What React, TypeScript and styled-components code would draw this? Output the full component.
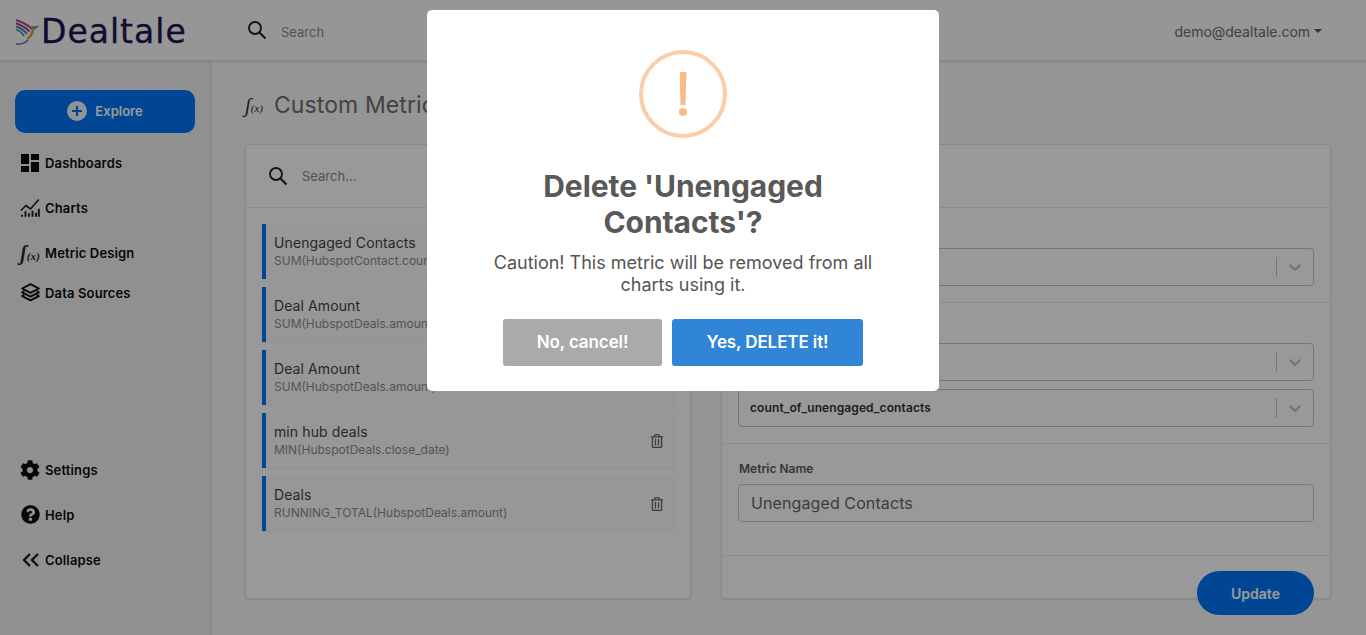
import React from "react";
import styled, { createGlobalStyle } from "styled-components";
import { MdDashboard } from "react-icons/md";
import { FaCog, FaQuestionCircle, FaRegTrashAlt } from "react-icons/fa";

const Global = createGlobalStyle`
  html, body { margin: 0; padding: 0; height: 100%; overflow: hidden; }
  body { font-family: Inter, "Liberation Sans", sans-serif; background: #f8f8f8; color: #212529; }
  * { box-sizing: border-box; }
`;

const Page = styled.div`
  width: 1366px;
  height: 635px;
  display: flex;
  flex-direction: column;
  overflow: hidden;
`;
const Header = styled.header`
  height: 61px;
  flex: none;
  display: flex;
  align-items: center;
  background: #fbfbfb;
  border-bottom: 1px solid #e2e2e2;
  box-shadow: 0 1px 3px rgba(0, 0, 0, 0.12);
  position: relative;
  z-index: 1;
`;
const Brand = styled.div`
  width: 247px;
  padding: 3px 0 0 15px;
  display: flex;
  align-items: center;
  flex: none;
`;
const BrandName = styled.span`
  font-family: "DejaVu Sans", sans-serif;
  font-size: 33px;
  font-weight: 400;
  letter-spacing: 1px;
  color: #1e1554;
  line-height: 1;
  -webkit-text-stroke: 0.35px #1e1554;
`;
const TopSearch = styled.div`
  display: flex;
  align-items: center;
  gap: 14px;
  flex: 1;
  font-size: 13px;
  color: #8a8a8a;
  & > span {
    margin-top: 3px;
  }
`;
const Account = styled.div`
  margin-right: 44px;
  margin-top: 3px;
  display: flex;
  align-items: center;
  gap: 4px;
  font-size: 14px;
  letter-spacing: -0.03px;
  color: #6d6d6d;
`;
const Caret = styled.span`
  width: 0;
  height: 0;
  border-left: 4px solid transparent;
  border-right: 4px solid transparent;
  border-top: 4px solid #555;
  margin-bottom: 2px;
`;
const Body = styled.div`
  flex: 1;
  display: flex;
  min-height: 0;
`;
const Sidebar = styled.aside`
  width: 211px;
  flex: none;
  background: #f0f1f2;
  border-right: 1px solid #e0e0e0;
  box-shadow: 1px 0 2px rgba(0, 0, 0, 0.08);
  padding: 29px 15px 0;
  display: flex;
  flex-direction: column;
`;
const Explore = styled.button`
  width: 180px;
  height: 43px;
  flex: none;
  border: none;
  border-radius: 10px;
  background: #0076f8;
  color: #fff;
  font-family: inherit;
  font-size: 13px;
  font-weight: 600;
  display: flex;
  align-items: center;
  justify-content: center;
  gap: 8px;
  padding: 0 0 1px 0;
  margin-bottom: 7px;
`;
const ExplorePlus = styled.span`
  width: 20px;
  height: 20px;
  border-radius: 50%;
  background: #f2f5f9;
  display: flex;
  align-items: center;
  justify-content: center;
`;
const NavItem = styled.div<{ $h?: number }>`
  height: ${(p) => p.$h ?? 45}px;
  display: flex;
  align-items: center;
  margin-left: 5px;
  font-size: 13px;
  font-weight: 600;
  letter-spacing: 0.15px;
  color: #0c0c0c;
  white-space: nowrap;
`;
const NavIcon = styled.span`
  width: 20px;
  height: 20px;
  margin-right: 5px;
  flex: none;
  display: flex;
  align-items: center;
  justify-content: center;
  color: #0c0c0c;
  & > svg {
    flex: none;
  }
`;
const NavSpacer = styled.div`
  height: 137px;
  flex: none;
`;
const FxGlyph = styled.span`
  font-family: "Liberation Serif", serif;
  font-style: italic;
  font-size: 20px;
  line-height: 20px;
  height: 20px;
  color: #2a2a2a;
  white-space: nowrap;
  display: inline-flex;
  align-items: baseline;
  & > small {
    font-size: 11px;
    margin-left: 0;
  }
`;
const Main = styled.main`
  flex: 1;
  padding: 27px 35px 0 34px;
  min-width: 0;
`;
const TitleRow = styled.div`
  height: 34px;
  display: flex;
  align-items: center;
  gap: 11px;
  margin-bottom: 22px;
`;
const Title = styled.h1`
  margin: 0;
  font-size: 23px;
  font-weight: 400;
  letter-spacing: 0.1px;
  color: #6f6f6f;
`;
const Columns = styled.div`
  display: flex;
  gap: 30px;
  align-items: flex-start;
`;
const Card = styled.section<{ $w: number }>`
  width: ${(p) => p.$w}px;
  height: 455px;
  flex: none;
  background: #fff;
  border: 1px solid #e3e3e3;
  border-radius: 4px;
  box-shadow: 0 1px 2px rgba(0, 0, 0, 0.08);
`;
const SearchRow = styled.div`
  height: 63px;
  border-bottom: 1px solid #ebebeb;
  display: flex;
  align-items: center;
  padding-left: 22px;
  gap: 14px;
  font-size: 13px;
  color: #888;
`;
const List = styled.ul`
  list-style: none;
  margin: 0;
  padding: 16px 15px 0 16px;
  display: flex;
  flex-direction: column;
  gap: 8px;
`;
const Item = styled.li`
  height: 55px;
  width: 413px;
  border-left: 4px solid #0076f8;
  background: #fcfcfc;
  box-shadow: 0 1px 2px rgba(0, 0, 0, 0.05);
  padding: 10px 11px 0 8px;
  display: flex;
  align-items: flex-start;
  justify-content: space-between;
`;
const ItemName = styled.div`
  font-size: 14px;
  line-height: 17px;
  letter-spacing: 0.1px;
  color: #444;
`;
const ItemFormula = styled.div`
  font-size: 12px;
  line-height: 16px;
  margin-top: 2px;
  color: #8c8c8c;
`;
const Trash = styled.span`
  color: #666;
  font-size: 14px;
  align-self: center;
  margin-top: -9px;
  display: flex;
`;
const CardHead = styled.div`
  height: 63px;
  border-bottom: 1px solid #ebebeb;
`;
const Section = styled.div<{ $h: number }>`
  height: ${(p) => p.$h}px;
  border-bottom: 1px solid #ebebeb;
  padding: 17px 16px 0;
  display: flex;
  flex-direction: column;
`;
const FieldLabel = styled.label`
  font-size: 12px;
  line-height: 15px;
  font-weight: 600;
  color: #5a5a5a;
  margin: 0 0 8px 1px;
`;
const Select = styled.div<{ $gap?: number }>`
  height: 38px;
  flex: none;
  margin-top: ${(p) => p.$gap ?? 0}px;
  border: 1px solid #c4c4c4;
  border-radius: 4px;
  padding: 0 8px 1px 11px;
  display: flex;
  align-items: center;
  justify-content: space-between;
  font-size: 12px;
  font-weight: 600;
  letter-spacing: 0.1px;
  color: #333;
`;
const SelectArrow = styled.span`
  display: flex;
  align-items: center;
  height: 20px;
  padding-left: 8px;
  border-left: 1px solid #c4c4c4;
`;
const TextInput = styled.div`
  height: 38px;
  flex: none;
  border: 1px solid #ccc;
  border-radius: 4px;
  padding: 0 12px;
  display: flex;
  align-items: center;
  font-size: 16px;
  letter-spacing: 0.1px;
  color: #666;
`;
const Footer = styled.div`
  display: flex;
  justify-content: flex-end;
  padding: 15px 16px 0;
`;
const Update = styled.button`
  width: 117px;
  height: 44px;
  border: none;
  border-radius: 22px;
  background: #0076f8;
  color: #fff;
  font-family: inherit;
  font-size: 14px;
  font-weight: 600;
`;
const Overlay = styled.div`
  position: fixed;
  inset: 0;
  z-index: 10;
  background: rgba(0, 0, 0, 0.4);
  display: flex;
  justify-content: center;
  align-items: flex-start;
  padding-top: 10px;
`;
const Modal = styled.div`
  width: 512px;
  height: 381px;
  background: #fff;
  border-radius: 5px;
  padding: 40px 64px 0;
  display: flex;
  flex-direction: column;
  align-items: center;
  text-align: center;
`;
const WarnIcon = styled.div`
  width: 88px;
  height: 88px;
  flex: none;
  border: 4px solid #facea8;
  border-radius: 50%;
  display: flex;
  flex-direction: column;
  align-items: center;
  padding-top: 18px;
`;
const WarnBar = styled.span`
  width: 7px;
  height: 33px;
  background: #f8bb86;
  clip-path: polygon(0 0, 100% 0, 85% 100%, 15% 100%);
`;
const WarnDot = styled.span`
  width: 8px;
  height: 8px;
  margin-top: 3px;
  border-radius: 50%;
  background: #f8bb86;
`;
const ModalTitle = styled.h2`
  margin: 30px 0 0;
  font-size: 30px;
  line-height: 36px;
  font-weight: 700;
  letter-spacing: -0.07px;
  color: #595959;
`;
const ModalText = styled.p`
  margin: 12px -10px 0;
  font-size: 18px;
  line-height: 22px;
  color: #545454;
`;
const ModalActions = styled.div`
  margin-top: 23px;
  display: flex;
  gap: 10px;
`;
const ModalButton = styled.button<{ $bg: string; $w: number }>`
  width: ${(p) => p.$w}px;
  height: 47px;
  border: none;
  border-radius: 3px;
  background: ${(p) => p.$bg};
  color: #fff;
  font-family: inherit;
  font-size: 17px;
  font-weight: 600;
  letter-spacing: -0.1px;
  padding: 0 0 1px;
`;

const SearchIcon = () => (
  <svg width="20" height="20" viewBox="0 0 20 20" fill="none" stroke="#222" strokeWidth="1.9">
    <circle cx="8" cy="8" r="6" />
    <path d="M12.5 12.5 L18.5 18.5" strokeWidth="2.2" />
  </svg>
);

const ChartIcon = () => (
  <svg width="20" height="20" viewBox="0 0 20 20" fill="none" stroke="#1a1a1a" strokeWidth="1.6">
    <path d="M0.8 12.5 L6 7.5 L10.5 11 L18.8 1.5" />
    <path d="M2 18.8v-2M5.5 18.8v-5.5M9 18.8v-3.5M12.5 18.8v-6M16 18.8v-4M18.8 18.8v-8" strokeWidth="1.9" />
  </svg>
);

const LayersIcon = () => (
  <svg width="19" height="19" viewBox="0 0 19 19" fill="none" stroke="#0c0c0c" strokeWidth="1.9" strokeLinejoin="round">
    <path d="M9.5 1.2 L17.8 5.5 L9.5 9.8 L1.2 5.5 Z" />
    <path d="M3.2 8 L1.2 9.3 L9.5 13.6 L17.8 9.3 L15.8 8" />
    <path d="M3.2 11.8 L1.2 13.1 L9.5 17.4 L17.8 13.1 L15.8 11.8" />
  </svg>
);

const CollapseIcon = () => (
  <svg width="17" height="14" viewBox="0 0 17 14" fill="none" stroke="#1a1a1a" strokeWidth="2.4">
    <path d="M8 1 L2 7 L8 13M16 1 L10 7 L16 13" />
  </svg>
);

const Chevron = () => (
  <svg width="20" height="20" viewBox="0 0 20 20" fill="#c4c4c4">
    <path d="M4.516 7.548c0.436-0.446 1.043-0.481 1.576 0l3.908 3.747 3.908-3.747c0.533-0.481 1.141-0.446 1.576 0 0.436 0.445 0.408 1.197 0 1.615-0.406 0.418-4.695 4.502-4.695 4.502-0.217 0.223-0.502 0.335-0.789 0.335s-0.572-0.112-0.789-0.335c0 0-4.287-4.084-4.695-4.502s-0.436-1.17 0-1.615z" />
  </svg>
);

const LogoMark = () => (
  <svg width="26" height="26" viewBox="0 0 26 26" fill="none" strokeWidth="2">
    <path d="M1 1 C7 3 13 6 17 10" stroke="#c0447a" />
    <path d="M1 4.2 C6 6 11 8.5 14.5 12.5" stroke="#8a4aa8" />
    <path d="M1 7.4 C5.5 9 9 11 12 15" stroke="#3a7fb0" />
    <path d="M1 10.6 C4.5 11.5 7 13.5 9 17" stroke="#3aa0a0" />
    <path d="M17 7 C19 11 17 16 12.5 20" stroke="#d99a3c" strokeWidth="2.4" />
    <path d="M18 7.5 L24.5 6.5 L19.5 11 Z" fill="#3aa0a8" stroke="none" />
    <path d="M1 25 C6 25.5 10 24 13 21" stroke="#5a5fb0" strokeWidth="1.3" />
  </svg>
);

const Fx = () => (
  <FxGlyph>
    ʃ<small>(x)</small>
  </FxGlyph>
);

const metrics = [
  ["Unengaged Contacts", "SUM(HubspotContact.count_of_unengaged_contacts)"],
  ["Deal Amount", "SUM(HubspotDeals.amount)"],
  ["Deal Amount", "SUM(HubspotDeals.amount)"],
  ["min hub deals", "MIN(HubspotDeals.close_date)"],
  ["Deals", "RUNNING_TOTAL(HubspotDeals.amount)"],
];

export default function App() {
  return (
    <Page>
      <Global />
      <Header>
        <Brand>
          <LogoMark />
          <BrandName>Dealtale</BrandName>
        </Brand>
        <TopSearch>
          <SearchIcon />
          <span>Search</span>
        </TopSearch>
        <Account>
          demo@dealtale.com
          <Caret />
        </Account>
      </Header>
      <Body>
        <Sidebar>
          <Explore>
            <ExplorePlus>
              <svg width="12" height="12" viewBox="0 0 12 12" stroke="#0076f8" strokeWidth="2.2">
                <path d="M6 1v10M1 6h10" />
              </svg>
            </ExplorePlus>
            Explore
          </Explore>
          <NavItem>
            <NavIcon>
              <MdDashboard size={24} />
            </NavIcon>
            Dashboards
          </NavItem>
          <NavItem>
            <NavIcon>
              <ChartIcon />
            </NavIcon>
            Charts
          </NavItem>
          <NavItem>
            <NavIcon>
              <Fx />
            </NavIcon>
            Metric Design
          </NavItem>
          <NavItem $h={35}>
            <NavIcon>
              <LayersIcon />
            </NavIcon>
            Data Sources
          </NavItem>
          <NavSpacer />
          <NavItem>
            <NavIcon>
              <FaCog size={20} />
            </NavIcon>
            Settings
          </NavItem>
          <NavItem>
            <NavIcon>
              <FaQuestionCircle size={19} />
            </NavIcon>
            Help
          </NavItem>
          <NavItem>
            <NavIcon>
              <CollapseIcon />
            </NavIcon>
            Collapse
          </NavItem>
        </Sidebar>
        <Main>
          <TitleRow>
            <Fx />
            <Title>Custom Metrics</Title>
          </TitleRow>
          <Columns>
            <Card $w={446}>
              <SearchRow>
                <SearchIcon />
                <span>Search...</span>
              </SearchRow>
              <List>
                {metrics.map(([name, formula], i) => (
                  <Item key={i}>
                    <div>
                      <ItemName>{name}</ItemName>
                      <ItemFormula>{formula}</ItemFormula>
                    </div>
                    <Trash>
                      <FaRegTrashAlt />
                    </Trash>
                  </Item>
                ))}
              </List>
            </Card>
            <Card $w={610}>
              <CardHead />
              <Section $h={95}>
                <FieldLabel>Data Source</FieldLabel>
                <Select>
                  HubspotContact
                  <SelectArrow>
                    <Chevron />
                  </SelectArrow>
                </Select>
              </Section>
              <Section $h={141}>
                <FieldLabel>Metric</FieldLabel>
                <Select>
                  SUM
                  <SelectArrow>
                    <Chevron />
                  </SelectArrow>
                </Select>
                <Select $gap={8}>
                  count_of_unengaged_contacts
                  <SelectArrow>
                    <Chevron />
                  </SelectArrow>
                </Select>
              </Section>
              <Section $h={112}>
                <FieldLabel>Metric Name</FieldLabel>
                <TextInput>Unengaged Contacts</TextInput>
              </Section>
              <Footer>
                <Update>Update</Update>
              </Footer>
            </Card>
          </Columns>
        </Main>
      </Body>
      <Overlay>
        <Modal>
          <WarnIcon>
            <WarnBar />
            <WarnDot />
          </WarnIcon>
          <ModalTitle>Delete 'Unengaged Contacts'?</ModalTitle>
          <ModalText>Caution! This metric will be removed from all charts using it.</ModalText>
          <ModalActions>
            <ModalButton $bg="#aaaaaa" $w={159}>No, cancel!</ModalButton>
            <ModalButton $bg="#3085d6" $w={191}>Yes, DELETE it!</ModalButton>
          </ModalActions>
        </Modal>
      </Overlay>
    </Page>
  );
}
